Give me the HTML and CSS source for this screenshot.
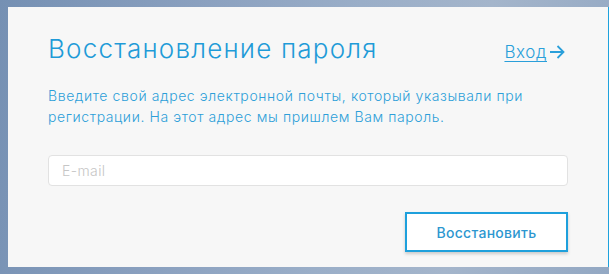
FILE: index.html
```html
<!DOCTYPE html>
<html lang="ru">
<head>
<meta charset="utf-8">
<title>Восстановление пароля</title>
<link rel="stylesheet" href="styles.css">
</head>
<body>
<div class="page">
  <div class="card">
    <div class="head">
      <h1 class="title">Восстановление пароля</h1>
      <a class="login" href="#"><span class="login-text">Вход</span><svg class="arrow" width="16" height="14" viewBox="0 0 16 14"><path d="M1 7H14.5M8.5 1L14.5 7L8.5 13" fill="none" stroke="#2a9fda" stroke-width="1.8"/></svg></a>
    </div>
    <p class="hint">Введите свой адрес электронной почты, который указывали при регистрации. На этот адрес мы пришлем Вам пароль.</p>
    <input class="email" type="text" placeholder="E-mail">
    <div class="actions">
      <button class="submit" type="button">Восстановить</button>
    </div>
  </div>
</div>
</body>
</html>
```

FILE: styles.css
```css
html, body {
  margin: 0;
  padding: 0;
  height: 100%;
}
body {
  background: linear-gradient(100deg, #7590b3 0%, #8aa0bf 30%, #9aaec8 55%, #a4b5cb 75%, #93a8c3 100%);
  font-family: "Inter", "Open Sans", sans-serif;
  overflow: hidden;
}
.page {
  padding: 7px 0 0 8px;
}
.card {
  box-sizing: border-box;
  width: 601px;
  height: 260px;
  background: #f7f7f7;
  padding: 23px 41px 0 40px;
  border-right: 1px solid #1ea2dd;
}
.head {
  display: flex;
  justify-content: space-between;
  align-items: baseline;
}
.title {
  margin: 0;
  font-weight: 300;
  font-size: 26px;
  line-height: 38px;
  color: #1f9bd8;
  letter-spacing: 1.2px;
}
.login {
  display: flex;
  align-items: center;
  text-decoration: none;
  color: #2a9fda;
  font-size: 17px;
  font-weight: 300;
  margin-right: 2px;
  letter-spacing: 0.6px;
}
.login-text {
  text-decoration: underline;
  text-decoration-thickness: 1px;
  text-underline-offset: 3px;
}
.arrow {
  margin-left: 2px;
}
.hint {
  margin: 17px 0 0 0;
  font-size: 14px;
  line-height: 21px;
  font-weight: 300;
  color: #2d9fd9;
  letter-spacing: 0.6px;
  max-width: 500px;
}
.email {
  display: block;
  box-sizing: border-box;
  width: 520px;
  height: 31px;
  margin-top: 28px;
  border: 1px solid #e2e2e2;
  border-radius: 4px;
  background: #fff;
  padding: 0 13px;
  font-family: inherit;
  font-size: 14px;
  font-weight: 300;
  letter-spacing: 0.4px;
  outline: none;
}
.email::placeholder {
  color: #c6c6c6;
}
.actions {
  display: flex;
  justify-content: flex-end;
  margin-top: 26px;
  width: 520px;
}
.submit {
  width: 163px;
  height: 40px;
  box-sizing: border-box;
  background: #fff;
  border: 2px solid #1ea0dc;
  box-shadow: 0 2px 3px rgba(0, 0, 0, 0.18);
  font-family: inherit;
  font-size: 14px;
  font-weight: 500;
  letter-spacing: 0.3px;
  color: #2d97d0;
  cursor: pointer;
}
```
